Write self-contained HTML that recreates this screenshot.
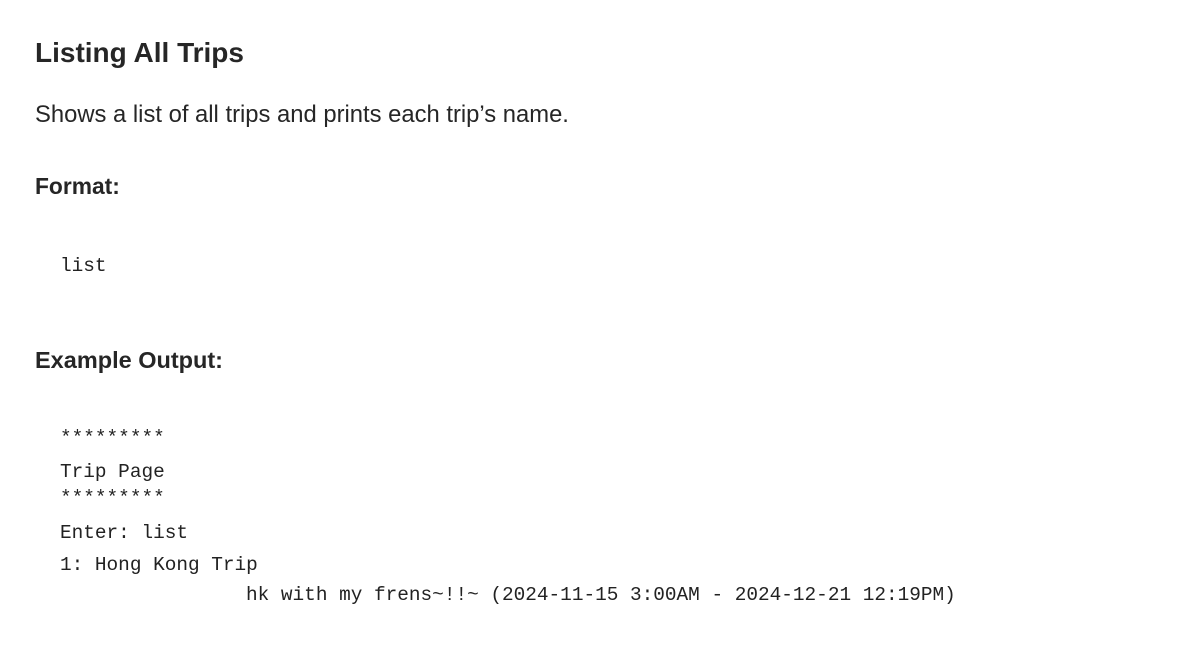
<!DOCTYPE html>
<html><head><meta charset="utf-8"><style>
body{margin:0;width:1184px;height:664px;background:#fff;color:#262626;font-family:"Liberation Sans",sans-serif;position:relative;overflow:hidden}
div{position:absolute;white-space:pre}
.h{left:35px;font-weight:bold}
.m{left:60px;font-family:"Liberation Mono",monospace;font-size:19.4px;color:#222}
</style></head><body>
<div class="h" style="top:37px;font-size:28px">Listing All Trips</div>
<div style="left:35px;top:101px;font-size:23.8px">Shows a list of all trips and prints each trip’s name.</div>
<div class="h" style="top:173px;font-size:22.8px">Format:</div>
<div class="m" style="top:255px">list</div>
<div class="h" style="top:347px;font-size:23.5px">Example Output:</div>
<div class="m" style="top:427px">*********</div>
<div class="m" style="top:461px">Trip Page</div>
<div class="m" style="top:487px">*********</div>
<div class="m" style="top:522px">Enter: list</div>
<div class="m" style="top:554px">1: Hong Kong Trip</div>
<div class="m" style="top:584px;left:246px">hk with my frens~!!~ (2024-11-15 3:00AM - 2024-12-21 12:19PM)</div>
</body></html>
